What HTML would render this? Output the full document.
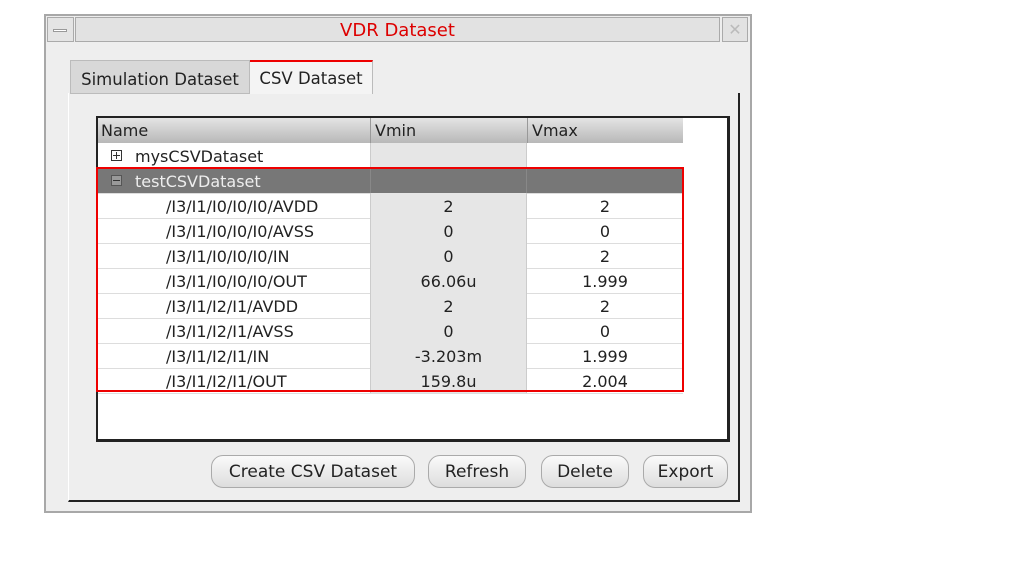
<html><head><style>
body{margin:0;width:1013px;height:566px;background:#fff;position:relative;font-family:"DejaVu Sans","Liberation Sans",sans-serif;overflow:hidden}
.a{position:absolute;box-sizing:border-box}
.row{position:absolute;left:98px;width:585px;height:25px;border-bottom:1px solid #ddd;font-size:16px;color:#222}
.row div{position:absolute;top:0;height:25px;line-height:27px}
.c1{left:0;width:272px}
.c2{left:272px;width:157px;background:#e6e6e6;text-align:center;border-left:1px solid #ccc;border-right:1px solid #ccc;box-sizing:border-box}
.c3{left:429px;width:156px;text-align:center}
.bx{position:absolute;left:13px;top:7px;width:11px;height:11px;border:1px solid #333;box-sizing:border-box}
.btn{position:absolute;top:455px;height:33px;border:1px solid #aaa;border-radius:12px;background:linear-gradient(#fafafa,#ddd);font-size:17px;color:#222;text-align:center;line-height:32px;box-sizing:border-box}
</style></head><body>
<div class="a" style="left:44px;top:14px;width:708px;height:499px;background:#eee;border:2px solid #a8a8a8"></div>
<div class="a" style="left:47px;top:17px;width:27px;height:25px;background:#e4e4e4;border:1px solid #aaa"></div>
<div class="a" style="left:53px;top:29px;width:14px;height:3px;background:#fff;border:1px solid #999"></div>
<div class="a" style="left:75px;top:17px;width:645px;height:25px;background:#e2e2e2;border:1px solid #aaa;text-align:center;color:#d00;font-size:18px;line-height:25px">VDR Dataset</div>
<div class="a" style="left:722px;top:17px;width:26px;height:25px;background:#e2e2e2;border:1px solid #aaa;color:#bbb;font-size:16px;text-align:center;line-height:23px">✕</div>
<div class="a" style="left:70px;top:60px;width:180px;height:34px;background:#d8d8d8;border:1px solid #bbb;font-size:16.5px;color:#222;line-height:38px;text-align:center">Simulation Dataset</div>
<div class="a" style="left:250px;top:60px;width:123px;height:34px;background:#f4f4f4;border-top:2px solid #e00;border-right:1px solid #bbb;font-size:16.5px;color:#222;line-height:34px;text-align:center">CSV Dataset</div>
<div class="a" style="left:68px;top:93px;width:672px;height:409px;border-right:2px solid #222;border-bottom:2px solid #222;border-left:1px solid #fff"></div>
<div class="a" style="left:96px;top:116px;width:634px;height:326px;background:#fff;border:2px solid #222;border-right-width:3px;border-bottom-width:3px"></div>
<div class="a" style="left:98px;top:118px;width:585px;height:25px;background:linear-gradient(#e4e4e4,#b8b8b8);font-size:16px;color:#222;line-height:25px">
<span style="position:absolute;left:3px">Name</span>
<span style="position:absolute;left:272px;border-left:1px solid #999;padding-left:4px;height:25px">Vmin</span>
<span style="position:absolute;left:429px;border-left:1px solid #999;padding-left:4px;height:25px">Vmax</span></div>
<div class="row" style="top:143px"><div class="c1" style="padding-left:37px">mysCSVDataset<span class="bx"></span><span style="position:absolute;left:15px;top:12px;width:7px;height:1px;background:#333"></span><span style="position:absolute;left:18px;top:9px;width:1px;height:7px;background:#333"></span></div><div class="c2"></div><div class="c3"></div></div>
<div class="row" style="top:168px;background:#777;color:#eee"><div class="c1" style="padding-left:37px">testCSVDataset<span class="bx" style="border-color:#555;background:#999"></span><span style="position:absolute;left:15px;top:12px;width:7px;height:1px;background:#333"></span></div><div class="c2" style="background:#777;border-color:#888"></div><div class="c3"></div></div>
<div class="row" style="top:193px"><div class="c1" style="padding-left:68px">/I3/I1/I0/I0/I0/AVDD</div><div class="c2">2</div><div class="c3">2</div></div>
<div class="row" style="top:218px"><div class="c1" style="padding-left:68px">/I3/I1/I0/I0/I0/AVSS</div><div class="c2">0</div><div class="c3">0</div></div>
<div class="row" style="top:243px"><div class="c1" style="padding-left:68px">/I3/I1/I0/I0/I0/IN</div><div class="c2">0</div><div class="c3">2</div></div>
<div class="row" style="top:268px"><div class="c1" style="padding-left:68px">/I3/I1/I0/I0/I0/OUT</div><div class="c2">66.06u</div><div class="c3">1.999</div></div>
<div class="row" style="top:293px"><div class="c1" style="padding-left:68px">/I3/I1/I2/I1/AVDD</div><div class="c2">2</div><div class="c3">2</div></div>
<div class="row" style="top:318px"><div class="c1" style="padding-left:68px">/I3/I1/I2/I1/AVSS</div><div class="c2">0</div><div class="c3">0</div></div>
<div class="row" style="top:343px"><div class="c1" style="padding-left:68px">/I3/I1/I2/I1/IN</div><div class="c2">-3.203m</div><div class="c3">1.999</div></div>
<div class="row" style="top:368px"><div class="c1" style="padding-left:68px">/I3/I1/I2/I1/OUT</div><div class="c2">159.8u</div><div class="c3">2.004</div></div>
<div class="a" style="left:96px;top:167px;width:588px;height:225px;border:2px solid #e00"></div>
<div class="btn" style="left:211px;width:204px">Create CSV Dataset</div>
<div class="btn" style="left:428px;width:98px">Refresh</div>
<div class="btn" style="left:541px;width:88px">Delete</div>
<div class="btn" style="left:643px;width:85px">Export</div>
</body></html>
